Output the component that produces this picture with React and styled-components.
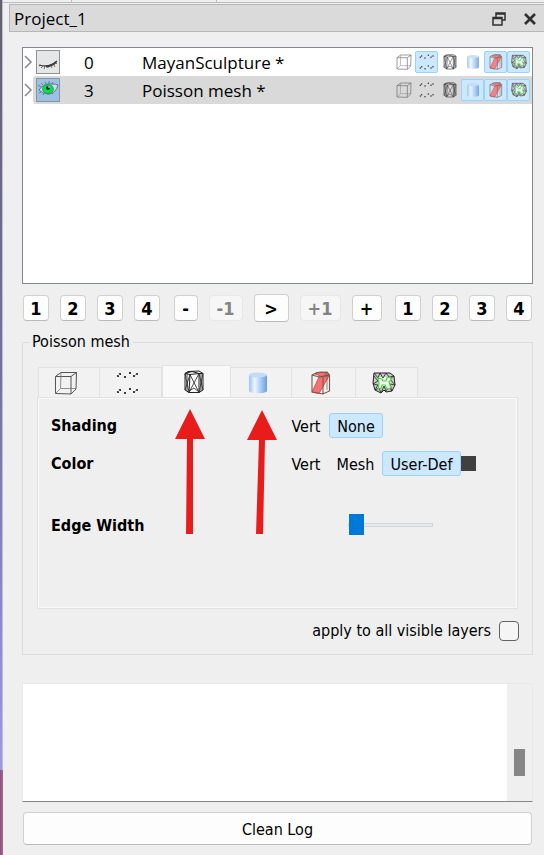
import React, { useState } from "react";
import styled, { createGlobalStyle } from "styled-components";

const uiFont = `"DejaVu Sans Condensed", "Noto Sans", sans-serif`;
const listFont = `"Open Sans", "Noto Sans", sans-serif`;

const GlobalStyle = createGlobalStyle`
  * { box-sizing: border-box; }
  body { margin: 0; background: #efefef; color: #000; font: 16px/20px "Noto Sans", sans-serif; }
  button, input, textarea { font: inherit; color: inherit; margin: 0; }
`;

const Window = styled.div`
  display: grid;
  grid-template-columns: 3px minmax(0, 1fr);
  min-height: 100vh;
`;

const ViewportEdge = styled.div`
  display: grid;
  grid-template-rows: 9fr 1fr;
`;

const EdgeUpper = styled.div`
  background: linear-gradient(to bottom, #62626a, #75739f 50%, #9c98e6);
  border-right: 1px solid #bdbbdc;
`;

const EdgeLower = styled.div`
  background: linear-gradient(to right, #8c527c, #a8688c);
`;

const Dock = styled.main`
  display: flex;
  flex-direction: column;
  min-width: 0;
`;

const ToolbarEdge = styled.div`
  display: grid;
  grid-template-columns: 69px 145px 1fr;
  height: 3px;
  margin-bottom: 1px;
  border-bottom: 1px solid #bcbcbc;
`;

const ToolbarSlot = styled.div`
  border-right: 1px solid #bcbcbc;
`;

const TitleBar = styled.header`
  display: flex;
  align-items: center;
  height: 28px;
  margin-left: 6px;
  padding: 2px 6px 0 4px;
  border: 1px solid #b6b6b6;
  border-right: 0;
  background: #dadada;
  font-family: ${listFont};
`;

const Title = styled.h1`
  flex: 1;
  margin: 0;
  font-size: 17px;
  font-weight: 400;
`;

const TitleButton = styled.button`
  display: grid;
  place-items: center;
  width: 16px;
  height: 20px;
  margin-left: 15px;
  padding: 0;
  border: 0;
  background: none;
`;

const Content = styled.div`
  display: flex;
  flex: 1;
  flex-direction: column;
  padding: 15px 11px 10px 19px;
`;

const LayerPanel = styled.section`
  height: 237px;
  border: 1px solid #828790;
  background: #fff;
  overflow: hidden;
`;

const LayerTable = styled.table`
  width: 100%;
  table-layout: fixed;
  border-collapse: collapse;
  font-family: ${listFont};
  font-size: 17px;
  line-height: 24px;
`;

const Col = styled.col`
  width: ${(p) => p.$w}px;
`;

const LayerRow = styled.tr`
  height: 28px;
  td:not(:first-child) { background: ${(p) => (p.$selected ? "#d9d9d9" : "#fff")}; }
  td:nth-child(2) { border-radius: 3px 0 0 3px; }
`;

const Cell = styled.td`
  padding: ${(p) => p.$pad || "0"};
  white-space: nowrap;
`;

const PlainButton = styled.button`
  display: block;
  padding: 0;
  border: 0;
  background: none;
  svg { display: block; }
`;

const EyeButton = styled(PlainButton)`
  width: 24px;
  height: 24px;
  border: 1px solid #8794a0;
  background: ${(p) => (p.$on ? "#9cc1e4" : "#e6e6e6")};
`;

const IconStrip = styled.div`
  display: flex;
`;

const RenderToggle = styled.button`
  display: grid;
  place-items: center;
  width: 23px;
  height: 22px;
  padding: 0;
  border: 1px solid ${(p) => (p.$on ? "#99d1ff" : "transparent")};
  border-radius: 2px;
  background: ${(p) => (p.$on ? "#cce8ff" : "transparent")};
  svg { opacity: 0.85; }
`;

const Bookmarks = styled.div`
  display: flex;
  align-items: center;
  justify-content: space-between;
  height: 28px;
  margin: 10px 1px 0;
`;

const ButtonGroup = styled.div`
  display: flex;
  align-items: center;
  gap: 11px;
`;

const PushButton = styled.button`
  width: ${(p) => p.$w}px;
  height: ${(p) => (p.$tall ? 28 : 26)}px;
  padding: 2px 0 0;
  border: 1px solid #d0d0d0;
  border-bottom-color: #bababa;
  border-radius: 4px;
  background: #fdfdfd;
  font: 700 18px/22px "DejaVu Sans Condensed", "DejaVu Sans", sans-serif;
  &:disabled { color: #838383; border-color: #e6e6e6; background: #f6f6f6; }
`;

const Group = styled.fieldset`
  display: flex;
  flex-direction: column;
  min-width: 0;
  height: 323px;
  margin: 10px 0 0;
  padding: 13px 14px 13px;
  border: 1px solid #dcdcdc;
`;

const Legend = styled.legend`
  margin-left: -7px;
  padding: 0 3px 0 2px;
  font: 16px/20px ${uiFont};
`;

const TabBar = styled.div`
  display: flex;
  align-items: flex-end;
  height: 32px;
  padding-left: 1px;
`;

const Tab = styled.button`
  display: grid;
  place-items: center;
  width: ${(p) => p.$w}px;
  height: ${(p) => (p.$active ? 32 : 30)}px;
  padding: 0 6px 0 0;
  border: 1px solid #e2e2e2;
  border-width: 1px 1px 0 ${(p) => (p.$first || p.$active ? 1 : 0)}px;
  background: ${(p) => (p.$active ? "#f9f9f9" : "#f2f2f2")};
`;

const Pane = styled.div`
  position: relative;
  height: 212px;
  padding: 14px 0 0 13px;
  border: 1px solid #e2e2e2;
  box-shadow: inset 0 0 0 1px #f9f9f9;
`;

const Setting = styled.div`
  display: grid;
  grid-template-columns: 232px 1fr;
  align-items: center;
  height: 26px;
  margin-bottom: ${(p) => p.$after || 12}px;
`;

const SettingName = styled.span`
  padding-top: 2px;
  font: 700 16px/22px ${uiFont};
`;

const Options = styled.div`
  display: flex;
  align-items: center;
`;

const Option = styled.button`
  width: ${(p) => p.$w}px;
  height: 25px;
  padding: 2px 0 0;
  border: 1px solid ${(p) => (p.$on ? "#99d1ff" : "transparent")};
  border-radius: 3px;
  background: ${(p) => (p.$on ? "#cce8ff" : "transparent")};
  font: 16px/22px ${uiFont};
  white-space: nowrap;
`;

const Swatch = styled.button`
  width: 15px;
  height: 15px;
  padding: 0;
  border: 0;
  background: #404040;
`;

const Slider = styled.input`
  appearance: none;
  width: 85px;
  height: 22px;
  margin-left: 65px;
  background: none;
  &::-webkit-slider-runnable-track {
    height: 4px;
    border: 1px solid #d3d6d6;
    background: #e7eaea;
  }
  &::-webkit-slider-thumb {
    appearance: none;
    width: 15px;
    height: 21px;
    margin-top: -10px;
    background: #0078d7;
  }
`;

const Annotations = styled.svg`
  position: absolute;
  left: 130px;
  top: 7px;
  pointer-events: none;
`;

const ApplyRow = styled.label`
  display: flex;
  align-items: center;
  justify-content: flex-end;
  gap: 8px;
  margin: 12px -1px 0 0;
  font: 16px/20px ${uiFont};
`;

const CheckBox = styled.input`
  appearance: none;
  width: 20px;
  height: 20px;
  border: 1px solid #626262;
  border-radius: 4px;
  background: #f5f5f5;
`;

const LogArea = styled.div`
  display: grid;
  grid-template-columns: minmax(0, 1fr) 25px;
  flex: 1;
  min-height: 118px;
  margin-top: 28px;
  border: 1px solid #e8e8e8;
  border-bottom-color: #868686;
`;

const LogText = styled.textarea`
  width: 100%;
  height: 100%;
  padding: 4px;
  border: 0;
  resize: none;
  background: #fff;
`;

const ScrollTrack = styled.div`
  display: grid;
  grid-template-rows: 64fr 27fr 25fr;
  justify-items: center;
`;

const ScrollThumb = styled.div`
  grid-row: 2;
  width: 11px;
  background: #868686;
`;

const CleanButton = styled.button`
  height: 33px;
  margin: 10px 1px 0;
  padding: 2px 0 0;
  border: 1px solid #d0d0d0;
  border-bottom-color: #bababa;
  border-radius: 4px;
  background: #fdfdfd;
  font: 16px/20px ${uiFont};
`;

function BoxIcon({ size }) {
  return (
    <svg width={size} height={size} viewBox="0 0 24 24" fill="none" stroke="#555">
      <path d="M1.500 5.500H17V23L1.500 22.500ZM1.500 5.500 7 1.500H22.500L17 5.500M22.500 1.500 22 18 17 23" />
      <path d="M7 1.500 6.500 17.500 1.500 22.500M6.500 17.500H22" strokeWidth=".8" stroke="#777" />
    </svg>
  );
}

function DotsIcon({ size }) {
  const dots = [[2, 5], [4, 3], [9, 6], [14, 2], [18, 5], [21, 3]];
  return (
    <svg width={size} height={size} viewBox="0 0 24 24" fill="#111">
      {[0, 16].map((dy) => dots.map(([x, y]) => <circle key={`${x}-${dy}`} cx={x} cy={y + dy} r="1.100" />))}
      <path d="m2 5 2-2M18 5l3-2M2 21l2-2M18 21l3-2" stroke="#777" strokeWidth=".7" />
    </svg>
  );
}

function WireIcon({ size }) {
  return (
    <svg width={size} height={size} viewBox="0 0 24 24" fill="none" stroke="#222">
      <path d="M3 3.500 6 1.500 17 1 21 3.500V20L17 22.500H7L3 20ZM3 3.500 8 4.500 17 3.500 21 3.500M8 4.500 7 22.500M17 3.500V22.500M3 3.500 10 1.500 17 3.500" />
      <path d="M3 3.500 7 22.500 17 3.500 21 20M8 4.500 17 22.500 21 3.500M3 20 8 4.500M5 3v18M19 3v18M7 21l5-3 5 4" strokeWidth=".8" />
    </svg>
  );
}

function CylinderIcon({ size, id }) {
  return (
    <svg width={size} height={size} viewBox="0 0 24 24">
      <defs>
        <linearGradient id={id}>
          <stop offset="0" stopColor="#9cc3ef" />
          <stop offset=".32" stopColor="#eef6ff" />
          <stop offset=".65" stopColor="#a9cdf5" />
          <stop offset="1" stopColor="#689edb" />
        </linearGradient>
      </defs>
      <path d="M3 4V20C4 23 20 23 21 20V4Z" fill={`url(#${id})`} />
      <ellipse cx="12" cy="4" rx="9" ry="2.500" fill="#c3dbf6" />
    </svg>
  );
}

function SelectedFaceIcon({ size }) {
  return (
    <svg width={size} height={size} viewBox="0 0 24 24" fill="none" stroke="#75584a" strokeWidth="1.100">
      <path d="M6 3 11 1 16 1.500 20 4 14 6Z" fill="#fa7072" stroke="#bd4648" strokeWidth=".8" />
      <path d="M10 6 20 5 10 22.500 3 21Z" fill="#fa7072" stroke="#bd4648" strokeWidth=".8" />
      <path d="M3 4 8 1.500 18 1 20.500 4V20L14 23 3 21ZM3 4 10 6 20.500 4M14 6V23" />
      <path d="M18 1V19M14 6 18 1" strokeWidth=".7" />
    </svg>
  );
}

function SelectedVertexIcon({ size }) {
  return (
    <svg width={size} height={size} viewBox="0 0 24 24" fill="none" stroke="#222">
      <path d="M2 2H18L22 5 23 14 20 20 14 21 12 19 9 22 3 19 1 12Z" fill="#c9c9c9" />
      <path d="M6 6 18 6 19 17 12 15 6 18Z" fill="#f0f5f0" stroke="none" />
      <path d="m2 2 4 5 2-5 3 5 3-5 3 4 5-1-4 3 5 6-5-1 2 7-3-4-3 4-2-5-3 7-2-5-4 2 3-5-5-1 5-3-4-5" strokeWidth=".8" />
      <path d="M6 7 10 8 11 10H14L15 7 18 6 19 9 17 11 19 17 15 18 13 14H10L9 17 6 18 7 12Z" fill="#f0f6f0" stroke="#4bd440" strokeWidth="1.200" />
    </svg>
  );
}

function ClosedEye() {
  return (
    <svg width="22" height="22" viewBox="0 0 22 22" fill="none" stroke="#3c3c3c">
      <path d="M2 14Q13 17 20 10" strokeWidth="1.200" />
      <path d="M9 15.500Q15 15 19 11" strokeWidth="1.800" />
      <path d="m4 14-2 1m4 0-2 2m4-2-1 3m4-3v2m3-2 1 2m2-3 1 2m1-4 1 1" strokeWidth=".7" />
    </svg>
  );
}

function OpenEye() {
  return (
    <svg width="22" height="22" viewBox="0 0 22 22" fill="none" stroke="#385261">
      <path d="M2 11Q6 5 13 5T21 6Q19 14 12 15 6 15 2 11Z" fill="#c9e1ed" strokeWidth=".7" />
      <ellipse cx="11" cy="10" rx="5.500" ry="4.500" fill="#0edb4d" stroke="#16934a" strokeWidth=".7" />
      <circle cx="11" cy="9" r="2" fill="#062b4b" stroke="none" />
      <circle cx="12" cy="8" r=".8" fill="#fff" stroke="none" />
      <path d="M4 8 1 6m5 0L4 4m5 1L8 3m4 2V2m3 3 1-2M4 13l-2 1m5 0-1 2m5-1v1m4-2 1 1" strokeWidth=".6" />
    </svg>
  );
}

const modes = ["Box", "Points", "Wireframe", "Solid", "Selected faces", "Selected vertices"];

function ModeIcon({ mode, size, scope }) {
  if (mode === 0) return <BoxIcon size={size} />;
  if (mode === 1) return <DotsIcon size={size} />;
  if (mode === 2) return <WireIcon size={size} />;
  if (mode === 3) return <CylinderIcon size={size} id={`cylinder-${scope}`} />;
  if (mode === 4) return <SelectedFaceIcon size={size} />;
  return <SelectedVertexIcon size={size} />;
}

const layers = [
  { id: 0, name: "MayanSculpture *", visible: false, on: [1, 4, 5] },
  { id: 3, name: "Poisson mesh *", visible: true, on: [3, 4, 5], selected: true },
];

const tabWidths = [62, 62, 69, 61, 64, 62];

function BookmarkButtons({ label }) {
  return (
    <ButtonGroup>
      {[1, 2, 3, 4].map((n) => (
        <PushButton key={n} $w={26} aria-label={`${label} ${n}`}>{n}</PushButton>
      ))}
    </ButtonGroup>
  );
}

export default function App() {
  const [tab, setTab] = useState(2);
  const [width, setWidth] = useState(0);
  return (
    <Window>
      <GlobalStyle />
      <ViewportEdge><EdgeUpper /><EdgeLower /></ViewportEdge>
      <Dock>
        <ToolbarEdge><ToolbarSlot /><ToolbarSlot /></ToolbarEdge>
        <TitleBar>
          <Title>Project_1</Title>
          <TitleButton aria-label="Float">
            <svg width="14" height="14" viewBox="0 0 14 14" fill="none" stroke="#303030" strokeWidth="1.500">
              <path d="M4 5V1H13V8H10M4 2H13M1 5.500H10V13H1ZM1 6.500H10" />
            </svg>
          </TitleButton>
          <TitleButton aria-label="Close">
            <svg width="12" height="12" viewBox="0 0 12 12" stroke="#303030" strokeWidth="2.600">
              <path d="m1 1 10 10M11 1 1 11" />
            </svg>
          </TitleButton>
        </TitleBar>
        <Content>
          <LayerPanel>
            <LayerTable>
              <colgroup><Col $w={10} /><Col $w={51} /><Col $w={57} /><col /><Col $w={140} /></colgroup>
              <tbody>
                {layers.map((layer) => (
                  <LayerRow key={layer.id} $selected={layer.selected}>
                    <Cell>
                      <PlainButton aria-label={`Expand ${layer.name}`}>
                        <svg width="10" height="14" viewBox="0 0 10 14" fill="none" stroke="#8b8b8b" strokeWidth="1.600">
                          <path d="m2 1 6 6-6 6" />
                        </svg>
                      </PlainButton>
                    </Cell>
                    <Cell $pad="0 0 0 3px">
                      <EyeButton $on={layer.visible} aria-label={`Visibility of ${layer.name}`}>
                        {layer.visible ? <OpenEye /> : <ClosedEye />}
                      </EyeButton>
                    </Cell>
                    <Cell $pad="2px 0 0">{layer.id}</Cell>
                    <Cell $pad="2px 0 0 1px">{layer.name}</Cell>
                    <Cell>
                      <IconStrip>
                        {modes.map((name, i) => (
                          <RenderToggle key={name} $on={layer.on.includes(i)} aria-label={name} aria-pressed={layer.on.includes(i)}>
                            <ModeIcon mode={i} size={16} scope={layer.id} />
                          </RenderToggle>
                        ))}
                      </IconStrip>
                    </Cell>
                  </LayerRow>
                ))}
              </tbody>
            </LayerTable>
          </LayerPanel>

          <Bookmarks>
            <BookmarkButtons label="Load view" />
            <ButtonGroup>
              <PushButton $w={24}>-</PushButton>
              <PushButton $w={34} disabled>-1</PushButton>
              <PushButton $w={35} $tall>&gt;</PushButton>
              <PushButton $w={41} disabled>+1</PushButton>
              <PushButton $w={30}>+</PushButton>
            </ButtonGroup>
            <BookmarkButtons label="Save view" />
          </Bookmarks>

          <Group>
            <Legend>Poisson mesh</Legend>
            <TabBar role="tablist">
              {modes.map((name, i) => (
                <Tab key={name} role="tab" aria-label={name} aria-selected={tab === i} $w={tabWidths[i]} $first={i === 0} $active={tab === i} onClick={() => setTab(i)}>
                  <ModeIcon mode={i} size={24} scope="tab" />
                </Tab>
              ))}
            </TabBar>
            <Pane role="tabpanel">
              <Setting>
                <SettingName>Shading</SettingName>
                <Options>
                  <Option $w={46}>Vert</Option>
                  <Option $w={54} $on aria-pressed="true">None</Option>
                </Options>
              </Setting>
              <Setting $after={36}>
                <SettingName>Color</SettingName>
                <Options>
                  <Option $w={46}>Vert</Option>
                  <Option $w={53}>Mesh</Option>
                  <Option $w={79} $on aria-pressed="true">User-Def</Option>
                  <Swatch aria-label="Pick color" />
                </Options>
              </Setting>
              <Setting>
                <SettingName as="label" htmlFor="edge-width">Edge Width</SettingName>
                <Slider id="edge-width" type="range" min="0" max="10" value={width} onChange={(e) => setWidth(Number(e.target.value))} />
              </Setting>
              <Annotations width="120" height="132" viewBox="0 0 120 132" fill="#e91c1c">
                <path d="M22 4 37 34H25L25 129H18L19 34H7Z" />
                <path d="M94 5 109 35H97L95 129H88L91 35H79Z" />
              </Annotations>
            </Pane>
            <ApplyRow>
              apply to all visible layers
              <CheckBox type="checkbox" />
            </ApplyRow>
          </Group>

          <LogArea>
            <LogText aria-label="Log" readOnly />
            <ScrollTrack><ScrollThumb /></ScrollTrack>
          </LogArea>
          <CleanButton>Clean Log</CleanButton>
        </Content>
      </Dock>
    </Window>
  );
}
